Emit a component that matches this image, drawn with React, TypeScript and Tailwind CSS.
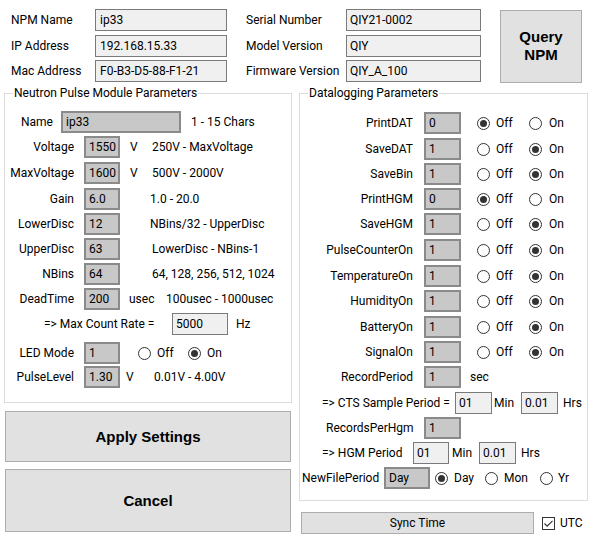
import clsx from "clsx";

type FieldProps = { value: string; gray?: boolean; className?: string };

function Field({ value, gray, className }: FieldProps) {
  return (
    <div
      className={clsx(
        "h-[22px] flex items-center pl-[3px] pb-[1px] shrink-0 whitespace-nowrap",
        gray
          ? "bg-[#c8c8c8] border-2 border-[#8a8a8a]"
          : "bg-[#f0f0f0] border border-[#7a7a7a]",
        className
      )}
    >
      {value}
    </div>
  );
}

function Radio({ on }: { on?: boolean }) {
  return (
    <span className="w-[13px] h-[13px] rounded-full border border-[#333] bg-white flex items-center justify-center shrink-0">
      {on && <span className="w-[7px] h-[7px] rounded-full bg-[#333]" />}
    </span>
  );
}

function OffOn({ on }: { on: boolean }) {
  return (
    <div className="flex items-center ml-[16px]">
      <div className="flex items-center w-[52px]">
        <Radio on={!on} />
        <span className="ml-[6px]">Off</span>
      </div>
      <Radio on={on} />
      <span className="ml-[7px]">On</span>
    </div>
  );
}

const npmRows = [
  { label: "Voltage", value: "1550", unit: "V", unitCls: "ml-[10px] w-[22px]", desc: "250V - MaxVoltage", mt: "mt-[3px]" },
  { label: "MaxVoltage", value: "1600", unit: "V", unitCls: "ml-[10px] w-[22px]", desc: "500V - 2000V", mt: "mt-[4px]" },
  { label: "Gain", value: "6.0", unit: "", unitCls: "ml-[10px] w-[20px]", desc: "1.0 - 20.0", mt: "mt-[4px]" },
  { label: "LowerDisc", value: "12", unit: "", unitCls: "ml-[10px] w-[20px]", desc: "NBins/32 - UpperDisc", mt: "mt-[3px]" },
  { label: "UpperDisc", value: "63", unit: "", unitCls: "ml-[10px] w-[22px]", desc: "LowerDisc - NBins-1", mt: "mt-[3px]" },
  { label: "NBins", value: "64", unit: "", unitCls: "ml-[10px] w-[22px]", desc: "64, 128, 256, 512, 1024", mt: "mt-[3px]" },
  { label: "DeadTime", value: "200", unit: "usec", unitCls: "ml-[9px] w-[37px]", desc: "100usec - 1000usec", mt: "mt-[3px]" },
];

const logRows = [
  { label: "PrintDAT", value: "0", on: false, mt: "mt-0" },
  { label: "SaveDAT", value: "1", on: true, mt: "mt-[4px]" },
  { label: "SaveBin", value: "1", on: true, mt: "mt-[3px]" },
  { label: "PrintHGM", value: "0", on: false, mt: "mt-[3px]" },
  { label: "SaveHGM", value: "1", on: true, mt: "mt-[3px]" },
  { label: "PulseCounterOn", value: "1", on: true, mt: "mt-[4px]" },
  { label: "TemperatureOn", value: "1", on: true, mt: "mt-[4px]" },
  { label: "HumidityOn", value: "1", on: true, mt: "mt-[3px]" },
  { label: "BatteryOn", value: "1", on: true, mt: "mt-[4px]" },
  { label: "SignalOn", value: "1", on: true, mt: "mt-[3px]" },
];

const topLeft = [
  { l: "NPM Name", v: "ip33", mt: "mt-0" },
  { l: "IP Address", v: "192.168.15.33", mt: "mt-[4px]" },
  { l: "Mac Address", v: "F0-B3-D5-88-F1-21", mt: "mt-[3px]" },
];

const topRight = [
  { l: "Serial Number", v: "QIY21-0002", mt: "mt-0" },
  { l: "Model Version", v: "QIY", mt: "mt-[4px]" },
  { l: "Firmware Version", v: "QIY_A_100", mt: "mt-[3px]" },
];

export default function App() {
  return (
    <div className="w-[593px] h-[543px] bg-white text-black text-[12px] leading-[16px] font-['Roboto',sans-serif] overflow-hidden">
      {/* device info */}
      <div className="flex pt-[9px] h-[83px]">
        <div className="flex flex-col pl-[11px]">
          {topLeft.map((r) => (
            <div key={r.l} className={clsx("flex items-center", r.mt)}>
              <span className="w-[84px]">{r.l}</span>
              <Field value={r.v} className="w-[132px] pl-[4px]" />
            </div>
          ))}
        </div>
        <div className="flex flex-col ml-[19px]">
          {topRight.map((r) => (
            <div key={r.l} className={clsx("flex items-center", r.mt)}>
              <span className="w-[100px] whitespace-nowrap">{r.l}</span>
              <Field value={r.v} className="w-[135px]" />
            </div>
          ))}
        </div>
        <button className="ml-[19px] mt-[1px] w-[82px] h-[73px] bg-[#e1e1e1] border border-[#adadad] font-['Liberation_Sans',sans-serif] font-bold text-[15px] leading-[18px] pb-[2px]">
          Query
          <br />
          NPM
        </button>
      </div>

      <div className="flex mt-[2px]">
        {/* left column */}
        <div className="flex flex-col ml-[4px] w-[288px]">
          <fieldset className="border border-[#dcdcdc] w-[288px] pt-[10px] pb-[14px]">
            <legend className="ml-[8px] px-[1px] leading-[16px]">Neutron Pulse Module Parameters</legend>
            <div className="flex items-center pl-[16px]">
              <span className="w-[40px]">Name</span>
              <Field gray value="ip33" className="w-[120px]" />
              <span className="ml-[10px]">1 - 15 Chars</span>
            </div>
            {npmRows.map((r) => (
              <div key={r.label} className={clsx("flex items-center", r.mt)}>
                <span className="w-[69px] text-right">{r.label}</span>
                <Field gray value={r.value} className="ml-[10px] w-[36px]" />
                <span className={r.unitCls}>{r.unit}</span>
                <span className="whitespace-nowrap">{r.desc}</span>
              </div>
            ))}
            <div className="flex items-center mt-[3px]">
              <span className="ml-[39px] w-[128px]">=&gt; Max Count Rate =</span>
              <Field value="5000" className="w-[56px]" />
              <span className="ml-[8px]">Hz</span>
            </div>
            <div className="flex items-center mt-[7px]">
              <span className="w-[69px] text-right">LED Mode</span>
              <Field gray value="1" className="ml-[10px] w-[36px]" />
              <div className="flex items-center ml-[18px] w-[50px]">
                <Radio />
                <span className="ml-[6px]">Off</span>
              </div>
              <Radio on />
              <span className="ml-[6px]">On</span>
            </div>
            <div className="flex items-center mt-[2px]">
              <span className="w-[69px] text-right">PulseLevel</span>
              <Field gray value="1.30" className="ml-[10px] w-[36px]" />
              <span className="ml-[6px] w-[28px]">V</span>
              <span>0.01V - 4.00V</span>
            </div>
          </fieldset>
          <button className="mt-[8px] ml-[1px] w-[286px] h-[51px] bg-[#e1e1e1] border border-[#adadad] font-['Liberation_Sans',sans-serif] font-bold text-[15px]">
            Apply Settings
          </button>
          <button className="mt-[7px] ml-[1px] w-[286px] h-[63px] bg-[#e1e1e1] border border-[#adadad] font-['Liberation_Sans',sans-serif] font-bold text-[15px]">
            Cancel
          </button>
        </div>

        {/* right column */}
        <div className="flex flex-col ml-[7px] w-[289px]">
          <fieldset className="border border-[#dcdcdc] w-[289px] pt-[11px] pb-[11px]">
            <legend className="ml-[8px] px-[1px] leading-[16px]">Datalogging Parameters</legend>
            {logRows.map((r) => (
              <div key={r.label} className={clsx("flex items-center", r.mt)}>
                <span className="w-[113px] text-right">{r.label}</span>
                <Field gray value={r.value} className="ml-[11px] w-[37px]" />
                <OffOn on={r.on} />
              </div>
            ))}
            <div className="flex items-center mt-[3px]">
              <span className="w-[113px] text-right">RecordPeriod</span>
              <Field gray value="1" className="ml-[11px] w-[37px]" />
              <span className="ml-[9px]">sec</span>
            </div>
            <div className="flex items-center mt-[4px]">
              <span className="ml-[22px] w-[133px] whitespace-nowrap">=&gt; CTS Sample Period =</span>
              <Field value="01" className="w-[37px]" />
              <span className="ml-[2px] w-[27px]">Min</span>
              <Field value="0.01" className="w-[37px]" />
              <span className="ml-[5px]">Hrs</span>
            </div>
            <div className="flex items-center mt-[3px]">
              <span className="ml-[26px] w-[98px]">RecordsPerHgm</span>
              <Field gray value="1" className="w-[37px]" />
            </div>
            <div className="flex items-center mt-[3px]">
              <span className="ml-[22px] w-[91px]">=&gt; HGM Period</span>
              <Field value="01" className="w-[36px]" />
              <span className="ml-[3px] w-[27px]">Min</span>
              <Field value="0.01" className="w-[37px]" />
              <span className="ml-[5px]">Hrs</span>
            </div>
            <div className="flex items-center mt-[3px]">
              <span className="ml-[2px] w-[82px]">NewFilePeriod</span>
              <Field gray value="Day" className="w-[46px]" />
              <div className="flex items-center ml-[5px] w-[50px]">
                <Radio on />
                <span className="ml-[6px]">Day</span>
              </div>
              <div className="flex items-center w-[55px]">
                <Radio />
                <span className="ml-[6px]">Mon</span>
              </div>
              <Radio />
              <span className="ml-[5px]">Yr</span>
            </div>
          </fieldset>
          <div className="flex items-center mt-[11px]">
            <button className="ml-[2px] w-[233px] h-[22px] bg-[#e1e1e1] border border-[#adadad]">Sync Time</button>
            <span className="ml-[8px] w-[13px] h-[13px] border border-[#333] bg-white flex items-center justify-center">
              <svg width="11" height="11" viewBox="0 0 11 11">
                <path d="M1.5 5.5 L4.2 8.2 L9.5 2.8" fill="none" stroke="#333" strokeWidth="1.2" />
              </svg>
            </span>
            <span className="ml-[5px]">UTC</span>
          </div>
        </div>
      </div>
    </div>
  );
}
